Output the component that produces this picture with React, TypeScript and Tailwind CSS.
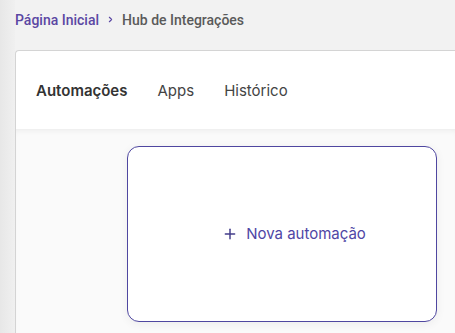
import { Plus, ChevronRight } from 'lucide-react';

const tabs = [
  { label: 'Automações', active: true },
  { label: 'Apps', active: false },
  { label: 'Histórico', active: false },
];

export default function App() {
  return (
    <div className="flex h-[333px] w-[455px] overflow-hidden bg-[#f2f2f2]">
      {/* sidebar shadow strip */}
      <div className="w-[15px] shrink-0 bg-gradient-to-r from-[#e7e7e7] to-[#f0f0f0]" />

      <div className="flex min-w-0 flex-1 flex-col">
        {/* Breadcrumb */}
        <div className="flex h-[50px] items-start pt-[10px] font-['Roboto',sans-serif] text-[14px] font-medium">
          <span className="text-[#5b47a3]">Página Inicial</span>
          <ChevronRight className="mx-[7px] mt-[5px] h-[9px] w-[9px] text-[#5b47a3]" strokeWidth={3} />
          <span className="text-[#5a5a5a]">Hub de Integrações</span>
        </div>

        {/* Card */}
        <div className="flex flex-1 flex-col rounded-tl-[4px] border-l border-t border-[#d4d4d4] bg-white">
          <div className="flex h-[78px] items-center gap-[30px] pl-[20px] pt-[2px] font-['Inter',sans-serif] text-[15px]">
            {tabs.map((tab) => (
              <span
                key={tab.label}
                className={tab.active ? 'font-semibold text-[#333]' : 'text-[#444]'}
              >
                {tab.label}
              </span>
            ))}
          </div>

          <div className="flex-1 bg-[#fafafa] pl-[111px] pt-[17px] shadow-[inset_0_5px_6px_-4px_rgba(0,0,0,0.07)]">
            <div className="flex h-[176px] w-[310px] items-center justify-center rounded-[12px] border border-[#4f47a0] bg-white pl-[24px] shadow-[0_2px_10px_rgba(0,0,0,0.06)]">
              <div className="flex items-center gap-[8px] font-['Inter',sans-serif] text-[15px] text-[#4f46a5]">
                <Plus className="h-[16px] w-[16px] text-[#433d8a]" strokeWidth={2.2} />
                <span>Nova automação</span>
              </div>
            </div>
          </div>
        </div>
      </div>
    </div>
  );
}
